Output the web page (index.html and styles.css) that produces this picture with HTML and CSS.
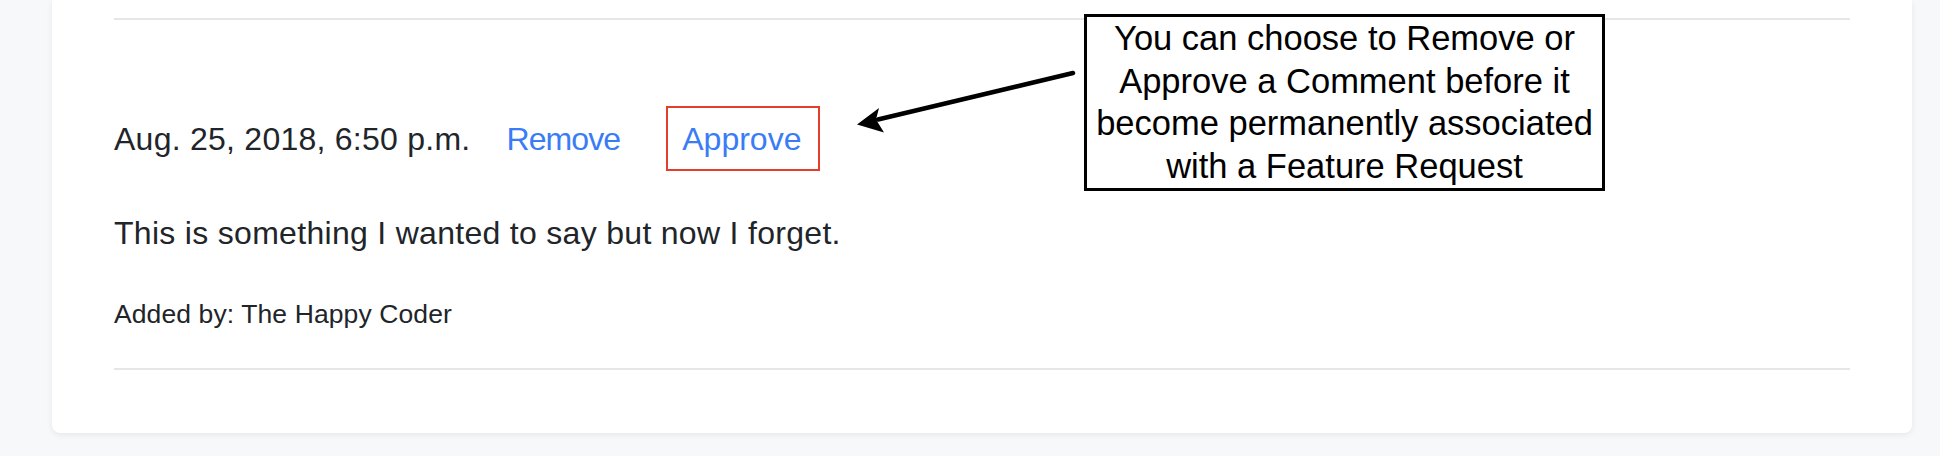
FILE: index.html
```html
<!DOCTYPE html>
<html lang="en">
<head>
<meta charset="utf-8">
<title>Comment moderation</title>
<link rel="stylesheet" href="styles.css">
</head>
<body>
<main class="page">
  <section class="card">
    <hr class="rule">
    <div class="comment-head">
      <span class="comment-date">Aug. 25, 2018, 6:50 p.m.</span>
      <a class="action action-remove" href="#">Remove</a>
      <a class="action action-approve" href="#">Approve</a>
    </div>
    <p class="comment-body">This is something I wanted to say but now I forget.</p>
    <p class="comment-meta">Added by: The Happy Coder</p>
    <hr class="rule rule-bottom">
  </section>
</main>
<div class="callout">You can choose to Remove or<br>Approve a Comment before it<br>become permanently associated<br>with a Feature Request</div>
<svg class="arrow" width="1940" height="456" viewBox="0 0 1940 456" aria-hidden="true">
  <line x1="1073" y1="73" x2="878" y2="119.5" stroke="#000" stroke-width="4.5" stroke-linecap="round"/>
  <polygon points="857,124.5 879,108 876,119.5 884,132.5" fill="#000"/>
</svg>
</body>
</html>
```
FILE: styles.css
```css
html, body {
  margin: 0;
  padding: 0;
}
body {
  background: #f7f8fa;
  width: 1940px;
  height: 456px;
  overflow: hidden;
  position: relative;
  font-family: "Liberation Sans", Arial, sans-serif;
  color: #212529;
}
.page {
  padding: 0 28px 0 52px;
}
.card {
  background: #fff;
  border-radius: 0 0 8px 8px;
  box-shadow: 0 2px 6px rgba(0, 0, 0, 0.07);
  padding: 18px 62px 63px;
}
.rule {
  margin: 0;
  border: 0;
  border-top: 2px solid #e6e6e6;
  height: 0;
}
.rule-bottom {
  margin-top: 34px;
}
.comment-head {
  display: flex;
  align-items: baseline;
  margin-top: 86px;
}
.comment-date {
  font-size: 32px;
  line-height: 48px;
  letter-spacing: 0.25px;
}
.action {
  font-size: 32px;
  line-height: 48px;
  color: #3a7cf6;
  text-decoration: none;
}
.action-remove {
  margin-left: 36px;
  letter-spacing: -0.9px;
}
.action-approve {
  margin-left: 46px;
  border: 2px solid #e23e2b;
  padding: 7px 17px 6px 14px;
}
.comment-body {
  margin: 38px 0 0;
  font-size: 32px;
  line-height: 48px;
  letter-spacing: 0.3px;
}
.comment-meta {
  margin: 37px 0 0;
  font-size: 26.5px;
  line-height: 40px;
  letter-spacing: 0.1px;
}
.callout {
  position: absolute;
  left: 1084px;
  top: 14px;
  width: 521px;
  height: 177px;
  box-sizing: border-box;
  border: 3px solid #000;
  background: #fff;
  color: #000;
  font-family: "Liberation Sans", Arial, sans-serif;
  font-size: 34.5px;
  line-height: 42.5px;
  text-align: center;
  white-space: nowrap;
}
.arrow {
  position: absolute;
  left: 0;
  top: 0;
  pointer-events: none;
}
```
